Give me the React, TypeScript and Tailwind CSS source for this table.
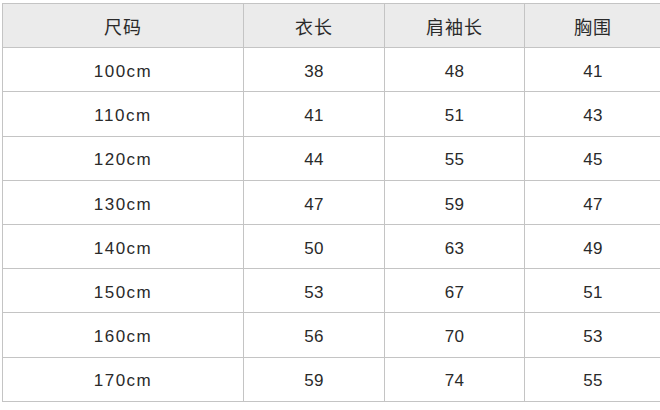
const head = ["尺码", "衣长", "肩袖长", "胸围"];

const rows = [
  ["100cm", "38", "48", "41"],
  ["110cm", "41", "51", "43"],
  ["120cm", "44", "55", "45"],
  ["130cm", "47", "59", "47"],
  ["140cm", "50", "63", "49"],
  ["150cm", "53", "67", "51"],
  ["160cm", "56", "70", "53"],
  ["170cm", "59", "74", "55"],
];

export default function App() {
  return (
    <div className="w-[660px] h-[410px] bg-white pl-[2px] pt-[3px] font-['Liberation_Sans','Noto_Sans_CJK_SC',sans-serif] text-[#2a2a2a]">
      <div className="w-[658px] grid grid-cols-[240px_140px_139px_136px] auto-rows-[43.2px] gap-px bg-[#c4c4c4] p-px">
        {head.map((h) => (
          <div key={h} className="bg-[#ebebeb] flex items-center justify-center text-[18px] tracking-[1px] pt-[6px]">
            {h}
          </div>
        ))}
        {rows.map((r) =>
          r.map((c, i) => (
            <div
              key={r[0] + i}
              className={
                "bg-white flex items-center justify-center text-[17px] pt-[4px] " +
                (i === 0 ? "tracking-[1.5px]" : "tracking-[0.3px]")
              }
            >
              {c}
            </div>
          ))
        )}
      </div>
    </div>
  );
}
